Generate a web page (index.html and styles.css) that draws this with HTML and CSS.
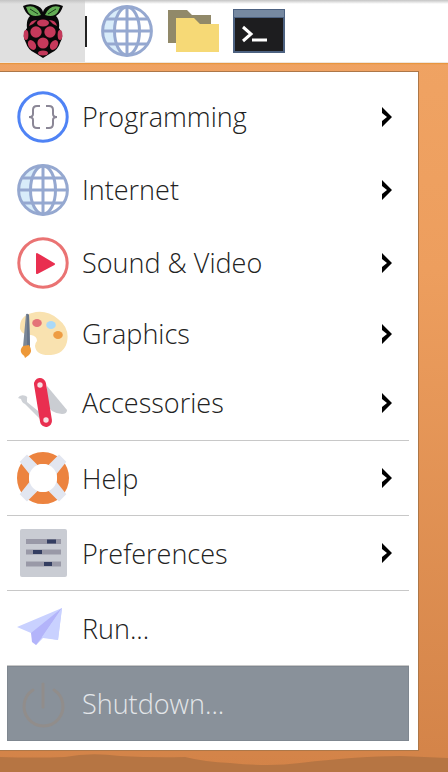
FILE: index.html
```html
<!DOCTYPE html>
<html lang="en">
<head>
    <meta charset="UTF-8">
    <meta name="viewport" content="width=device-width, initial-scale=1.0">
    <title>Desktop Menu</title>
    <link rel="stylesheet" href="styles.css">
</head>
<body>
    <svg class="defs" aria-hidden="true">
        <symbol id="globe" viewBox="0 0 52 52">
            <circle cx="26" cy="26" r="24" fill="#fff"/>
            <path d="M26 2A24 24 0 0 0 26 50Q14 42 14 26T26 2Z" fill="#d8ecfa"/>
            <g fill="none" stroke="#95a8d0" stroke-width="3">
                <circle cx="26" cy="26" r="24.4"/>
                <ellipse cx="26" cy="26" rx="12.5" ry="24"/>
                <path d="M26 2v48M2 26h48M6 14h40M6 39h40"/>
            </g>
        </symbol>
        <symbol id="arrow" viewBox="0 0 10 20">
            <path d="M0 0L10 10L0 20V14L5 10L0 6Z" fill="#000"/>
        </symbol>
    </svg>

    <header class="taskbar">
        <button class="launcher menu-button" aria-label="Menu">
            <svg width="42" height="54" viewBox="0 0 42 54">
                <path d="M21 12C18 14 12 15 8 12Q3 9 1 2Q7 -1 13 1Q20 3 21 8Q22 3 29 1Q35 -1 41 2Q39 9 34 12Q38 16 37 24Q43 31 38 39Q36 46 29 49L21 54L13 49Q6 46 4 39Q-1 31 5 24Q4 16 8 12Z" fill="#080808"/>
                <path d="M4 3Q14 0 19 11Q10 14 6 8ZM38 3Q28 0 23 11Q32 14 36 8Z" fill="#63ad55"/>
                <path d="M8 5L16 10M34 5L26 10" stroke="#183c19" stroke-width="1"/>
                <g fill="#c5395b">
                    <ellipse cx="21" cy="19" rx="6" ry="3.4"/>
                    <path d="M7 22Q8 16 15 16Q12 20 7 22ZM35 22Q34 16 27 16Q30 20 35 22Z"/>
                    <circle cx="14" cy="28" r="5.7"/>
                    <circle cx="28" cy="28" r="5.7"/>
                    <ellipse cx="4" cy="31" rx="2.4" ry="5"/>
                    <ellipse cx="38" cy="31" rx="2.4" ry="5"/>
                    <circle cx="21" cy="39" r="5.6"/>
                    <ellipse cx="10" cy="41" rx="3.6" ry="5.3" transform="rotate(-32 10 41)"/>
                    <ellipse cx="32" cy="41" rx="3.6" ry="5.3" transform="rotate(32 32 41)"/>
                    <ellipse cx="21" cy="49" rx="5" ry="2.5"/>
                </g>
            </svg>
        </button>
        <span class="divider"></span>
        <button class="launcher" aria-label="Web browser">
            <svg width="52" height="52"><use href="#globe"/></svg>
        </button>
        <button class="launcher" aria-label="Files">
            <svg width="52" height="44" viewBox="0 0 52 44">
                <path d="M1 1H20L25 6H44V34H1Z" fill="#918969"/>
                <path d="M9 9H27L33 15H52V43H9Z" fill="#f6d976"/>
            </svg>
        </button>
        <button class="launcher" aria-label="Terminal">
            <svg width="52" height="44" viewBox="0 0 52 44">
                <path d="M0 0H52V44H0Z" fill="#4d6281"/>
                <path d="M1 1H51V8H1Z" fill="#7689a1"/>
                <path d="M2 9H50V42H2Z" fill="#1d1d1f"/>
                <path d="M10 18L18 25L10 32" fill="none" stroke="#fff" stroke-width="3"/>
                <path d="M19 31H34" stroke="#fff" stroke-width="3"/>
            </svg>
        </button>
    </header>

    <nav class="menu">
        <div class="group categories">
            <a class="item" href="#">
                <svg class="icon" viewBox="0 0 52 52">
                    <circle cx="26" cy="26" r="24.2" fill="#fff" stroke="#4f83f5" stroke-width="3"/>
                    <path d="M23 15H20Q16 15 16 19V23Q16 26 12 26Q16 26 16 29V33Q16 37 20 37H23M29 15H32Q36 15 36 19V23Q36 26 40 26Q36 26 36 29V33Q36 37 32 37H29" fill="none" stroke="#8b8796" stroke-width="2"/>
                </svg>
                <span class="label">Programming</span>
                <svg class="arrow"><use href="#arrow"/></svg>
            </a>
            <a class="item" href="#">
                <svg class="icon"><use href="#globe"/></svg>
                <span class="label">Internet</span>
                <svg class="arrow"><use href="#arrow"/></svg>
            </a>
            <a class="item" href="#">
                <svg class="icon" viewBox="0 0 52 52">
                    <circle cx="26" cy="26" r="24.2" fill="#fff" stroke="#ea7373" stroke-width="3"/>
                    <path d="M20 17L37 27L20 36Z" fill="#e92f50" stroke="#e92f50" stroke-width="2" stroke-linejoin="round"/>
                </svg>
                <span class="label">Sound &amp; Video</span>
                <svg class="arrow"><use href="#arrow"/></svg>
            </a>
            <a class="item short" href="#">
                <svg class="icon" viewBox="0 0 52 52">
                    <path d="M3 21Q2 8 15 5Q29 1 41 11Q53 20 50 34Q47 46 34 47Q19 48 18 38Q18 35 20 33Q20 28 14 27Q5 27 3 21Z" fill="#f9e2b0"/>
                    <ellipse cx="20" cy="15" rx="4.8" ry="4" fill="#e47378"/>
                    <ellipse cx="34" cy="17" rx="4.8" ry="4" fill="#aad9f8"/>
                    <ellipse cx="41" cy="27" rx="4.8" ry="4" fill="#ee9c43"/>
                    <path d="M9 6Q11 5 12 7L13 39H6Z" fill="#7b8797"/>
                    <path d="M10 6L12 7L13 39H10Z" fill="#67758a"/>
                    <path d="M6 38L12 37Q16 43 12 47L8 50Q8 48 5 46Q2 42 6 38Z" fill="#ed9838"/>
                </svg>
                <span class="label">Graphics</span>
                <svg class="arrow"><use href="#arrow"/></svg>
            </a>
            <a class="item short" href="#">
                <svg class="icon" viewBox="0 0 52 52">
                    <path d="M30 9L50 33Q50 37 45 37Q40 37 35 34L28 26Z" fill="#cacdd2"/>
                    <path d="M1 21Q3 17 9 19Q11 20 10 22L10 25L26 38L24 43L8 27Q5 26 4 22Z" fill="#ced1d6"/>
                    <path d="M23 7L29 44" stroke="#e92f50" stroke-width="12" stroke-linecap="round"/>
                    <circle cx="23" cy="8" r="2.7" fill="#f7dfe2"/>
                    <circle cx="29" cy="43" r="2.7" fill="#f7dfe2"/>
                </svg>
                <span class="label">Accessories</span>
                <svg class="arrow"><use href="#arrow"/></svg>
            </a>
        </div>
        <div class="group">
            <a class="item" href="#">
                <svg class="icon" viewBox="0 0 52 52">
                    <circle cx="26" cy="26" r="20" fill="none" stroke="#ec833f" stroke-width="12"/>
                    <path d="M6 10L10 6L19 15L14 20ZM46 10L42 6L33 15L38 20ZM6 42L10 46L19 37L14 32ZM46 42L42 46L33 37L38 32Z" fill="#e2e6f0" stroke="#e2e6f0" stroke-width="5"/>
                    <circle cx="26" cy="26" r="14" fill="#fff"/>
                </svg>
                <span class="label">Help</span>
                <svg class="arrow"><use href="#arrow"/></svg>
            </a>
        </div>
        <div class="group">
            <a class="item" href="#">
                <svg class="icon" viewBox="0 0 52 52">
                    <rect x="3" y="2" width="47" height="48" rx="2" fill="#c9ccd3"/>
                    <path d="M9 14.5H44M9 25H44M9 37H44" stroke="#9999a7" stroke-width="5"/>
                    <path d="M30 14.5H39M16 25H25M27 37H35" stroke="#343e61" stroke-width="4"/>
                </svg>
                <span class="label">Preferences</span>
                <svg class="arrow"><use href="#arrow"/></svg>
            </a>
        </div>
        <div class="group">
            <a class="item" href="#">
                <svg class="icon" viewBox="0 0 52 52">
                    <path d="M0 25L45 6L41 38L26 36L19 43L14 31Z" fill="#c9d1ff"/>
                    <path d="M45 6L14 31L15 40L19 43L26 34Z" fill="#b3b4fa"/>
                    <path d="M45 6L25 35L41 38Z" fill="#c9d1ff"/>
                </svg>
                <span class="label">Run...</span>
            </a>
        </div>
        <div class="group">
            <a class="item selected" href="#">
                <svg class="icon" viewBox="0 0 52 52">
                    <path d="M26 6V29M16 12A19.5 19.5 0 1 0 37 12" fill="none" stroke="#918d8b" stroke-width="3" stroke-linecap="round"/>
                </svg>
                <span class="label">Shutdown...</span>
            </a>
        </div>
    </nav>

    <footer class="dunes">
        <svg width="100%" height="20" viewBox="0 0 448 20" preserveAspectRatio="none">
            <path d="M0 5Q35 6 65 5Q90 0 120 4Q155 6 185 5Q205 10 230 11Q270 15 300 11Q360 4 400 4L448 6V20H0Z" fill="#b67543"/>
        </svg>
    </footer>
</body>
</html>
```

FILE: styles.css
```css
* {
    box-sizing: border-box;
}
body {
    font-family: "Open Sans", "Noto Sans", sans-serif;
    font-weight: 300;
    margin: 0;
    min-height: 100vh;
    display: flex;
    flex-direction: column;
    background: linear-gradient(#f0a464, #ed9e5e 35%, #d38348);
}
.defs {
    position: absolute;
    width: 0;
    height: 0;
}
.taskbar {
    display: flex;
    align-items: center;
    height: 63px;
    background: linear-gradient(#c4c4c4, #fff 4px);
    border-bottom: 1px solid #eee6df;
    box-shadow: 0 1px 1px #e8963f;
}
.launcher {
    display: flex;
    padding: 0;
    margin-right: 14px;
    border: none;
    background: none;
    cursor: pointer;
}
.menu-button {
    width: 85px;
    height: 62px;
    margin: 0;
    align-items: center;
    justify-content: center;
    background: linear-gradient(#c4c4c4, #e0e0e0 4px);
}
.divider {
    width: 2px;
    height: 31px;
    margin-right: 14px;
    background: #222;
}
.menu {
    width: calc(100% - 29px);
    margin-top: 8px;
    padding: 8px 9px 9px 7px;
    background: #fff;
    border: 1px solid #ad7748;
    border-left: none;
}
.group {
    border-top: 1px solid #c8c8c8;
}
.categories {
    border-top: none;
    padding-bottom: 3px;
}
.item {
    display: flex;
    align-items: center;
    height: 74px;
    padding: 0 17px 0 10px;
    font-size: 27px;
    color: #222;
    text-decoration: none;
}
.categories .item {
    height: 73px;
}
.categories .short {
    height: 69px;
}
.icon {
    width: 52px;
    height: 52px;
    margin-right: 13px;
}
.label {
    flex: 1;
}
.arrow {
    width: 10px;
    height: 20px;
}
.selected {
    height: 75px;
    background: #89919a;
    box-shadow: inset 0 0 0 1px #7f8790;
    color: #e3e6e9;
}
.dunes {
    display: flex;
    margin-top: auto;
}
```
